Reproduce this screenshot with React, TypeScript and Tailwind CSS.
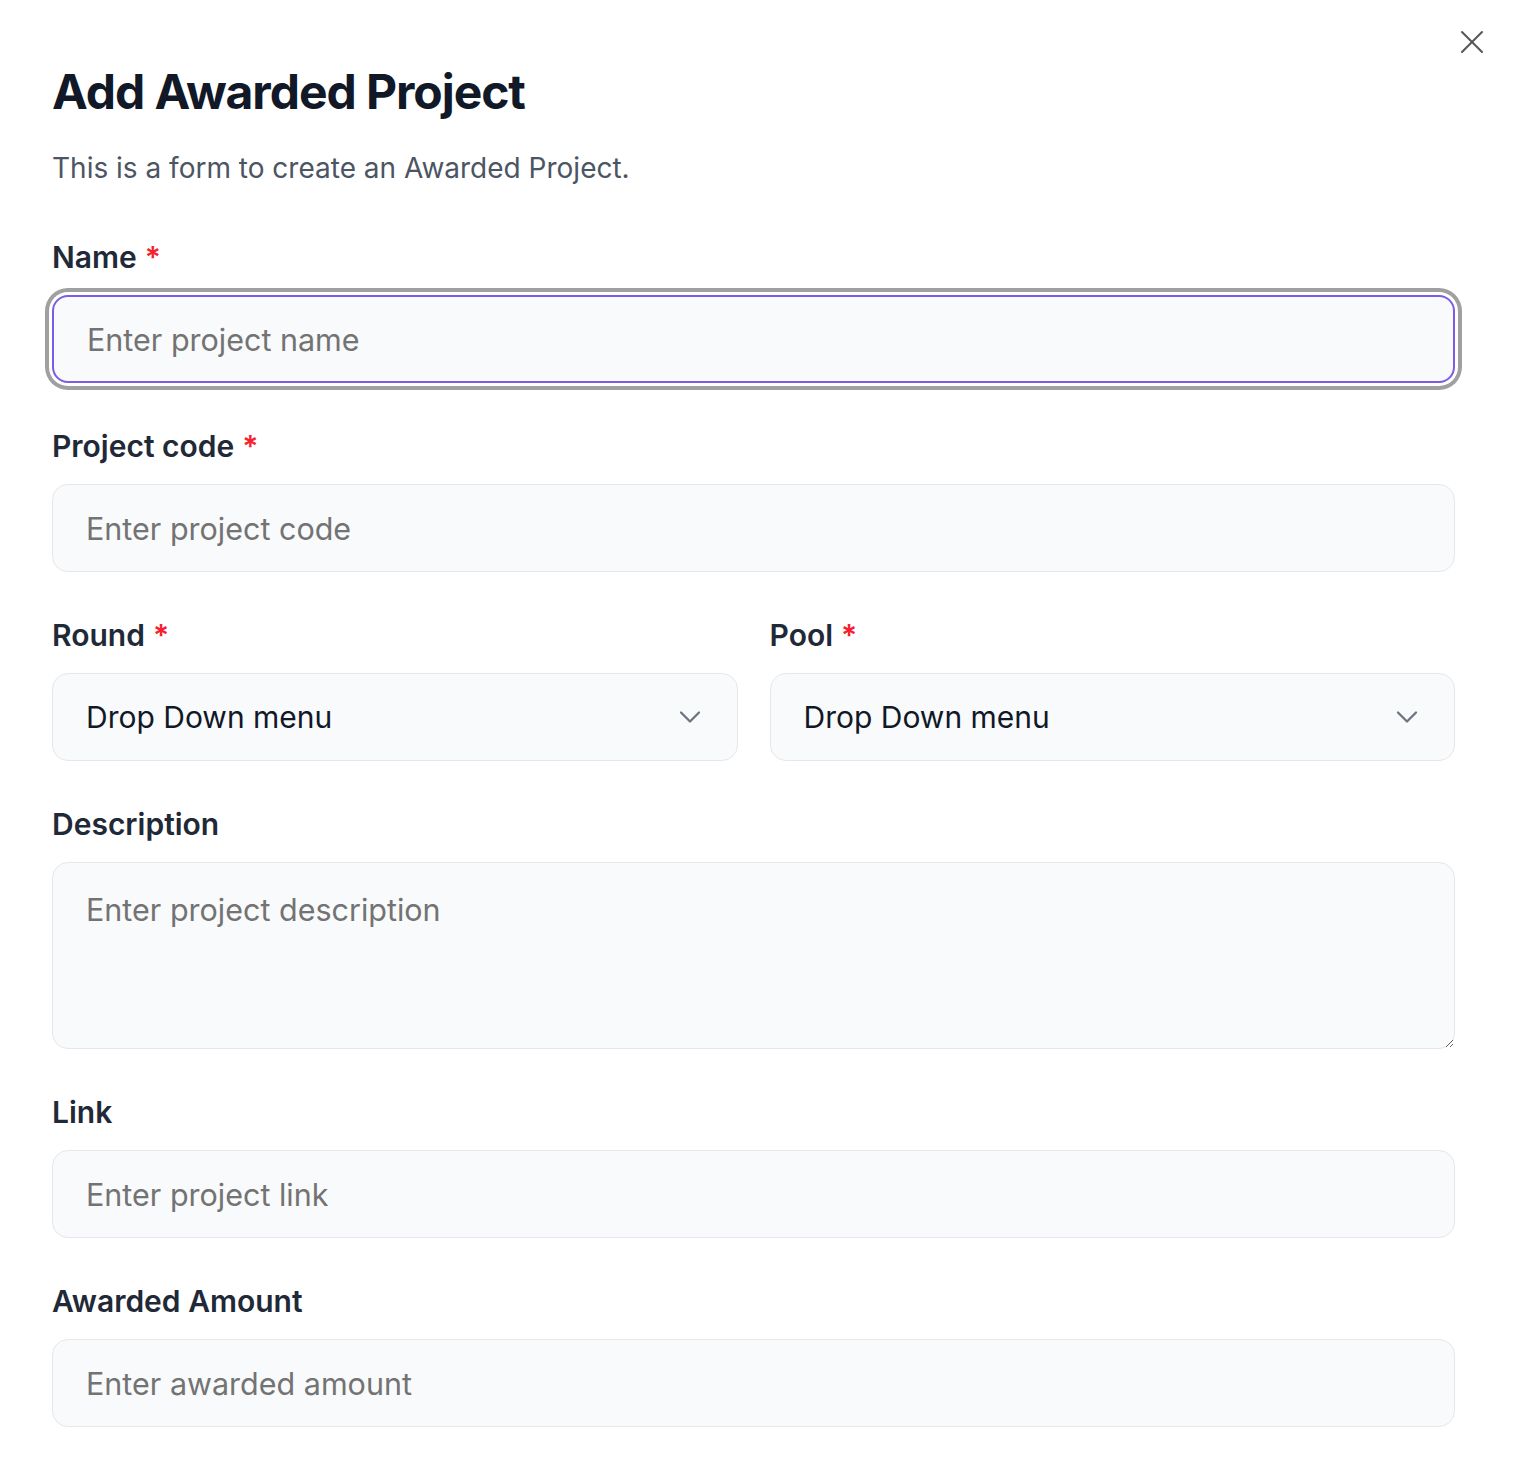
import { X, ChevronDown } from "lucide-react"

const inputBase =
  "w-full h-[88px] rounded-2xl bg-[#f9fafb] px-[33px] text-[30.5px] text-[#111827] placeholder:text-[#737373] outline-none"

function Label({ text, required }: { text: string; required?: boolean }) {
  return (
    <label className="block h-[36px] mb-[20px] text-[30px] leading-[36px] font-semibold text-[#1f2937]">
      {text}
      {required && <span className="ml-[8px] text-[#f5222d]">*</span>}
    </label>
  )
}

function Select() {
  return (
    <button
      type="button"
      className="flex w-full h-[88px] items-center justify-between rounded-2xl border border-[#e5e7eb] bg-[#f9fafb] pl-[33px] pr-[29px] text-[30px] text-[#111827]"
    >
      <span>Drop Down menu</span>
      <ChevronDown size={36} strokeWidth={1.5} className="text-[#6b7280]" />
    </button>
  )
}

export default function App() {
  return (
    <div className="relative min-h-[1462px] bg-white font-['Inter',sans-serif]">
      <button type="button" className="absolute top-[22px] right-[22px] text-[#555555]" aria-label="Close">
        <X size={40} strokeWidth={1.2} />
      </button>

      <div className="pl-[52px] pr-[59px] pt-[66px]">
        <h1 className="text-[48px] leading-[52px] font-bold tracking-[-0.022em] text-[#111827]">Add Awarded Project</h1>
        <p className="mt-[32px] text-[28px] leading-[36px] text-[#4b5563]">This is a form to create an Awarded Project.</p>

        <form className="mt-[53px] flex flex-col gap-[45px]">
          <div>
            <Label text="Name" required />
            <input
              autoFocus
              placeholder="Enter project name"
              className={`${inputBase} border-2 border-[#7c5ce6] ring-4 ring-[#a0a0a0] ring-offset-[3px] ring-offset-white`}
            />
          </div>

          <div>
            <Label text="Project code" required />
            <input placeholder="Enter project code" className={`${inputBase} border border-[#e5e7eb]`} />
          </div>

          <div className="grid grid-cols-2 gap-[32px]">
            <div>
              <Label text="Round" required />
              <Select />
            </div>
            <div>
              <Label text="Pool" required />
              <Select />
            </div>
          </div>

          <div>
            <Label text="Description" />
            <textarea
              placeholder="Enter project description"
              className="block w-full h-[187px] rounded-2xl border border-[#e5e7eb] bg-[#f9fafb] px-[33px] pt-[29px] text-[30.5px] leading-[36px] text-[#111827] placeholder:text-[#737373] outline-none"
            />
          </div>

          <div>
            <Label text="Link" />
            <input placeholder="Enter project link" className={`${inputBase} border border-[#e5e7eb]`} />
          </div>

          <div>
            <Label text="Awarded Amount" />
            <input placeholder="Enter awarded amount" className={`${inputBase} border border-[#e5e7eb]`} />
          </div>
        </form>
      </div>
    </div>
  )
}
